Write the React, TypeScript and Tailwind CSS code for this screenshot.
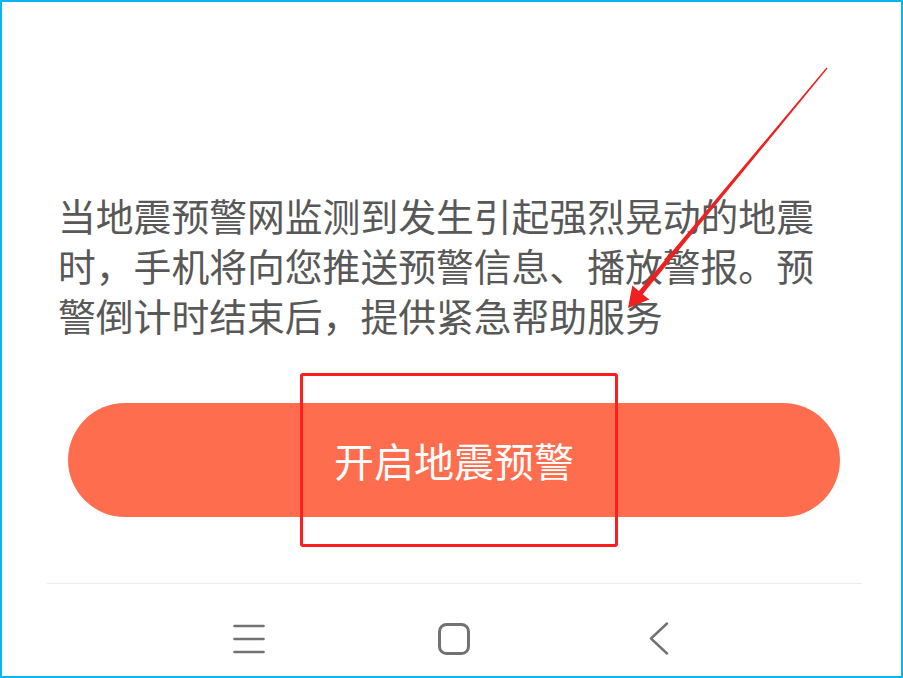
import React from 'react';

const cjk = { fontFamily: '"Noto Sans CJK SC", "Noto Sans", sans-serif' };

const App: React.FC = () => {
  return (
    <div
      className="relative w-[903px] h-[678px] box-border border-2 border-[#0bb4ee] bg-white overflow-hidden"
      style={cjk}
    >
      <div className="flex flex-col pt-[188px]">
        <p className="ml-[56px] w-[780px] text-[37.8px] leading-[50px] text-[#585858]">
          当地震预警网监测到发生引起强烈晃动的地震时，手机将向您推送预警信息、播放警报。预警倒计时结束后，提供紧急帮助服务
        </p>

        <button className="ml-[66px] mt-[63px] w-[772px] h-[114px] rounded-full bg-[#fe6e4e] text-white text-[40px] flex items-center justify-center">
          开启地震预警
        </button>

        <div className="ml-[45px] mt-[66px] w-[815px] h-px bg-[#ececec]" />

        {/* nav bar */}
        <div className="flex items-center ml-[227px] mt-[38px] gap-[165px]">
          <div className="w-[40px] flex justify-center">
            <svg width="32" height="32" viewBox="0 0 32 32" fill="none" stroke="#727272" strokeWidth="2.6" strokeLinecap="round">
              <line x1="1.5" y1="3" x2="30.5" y2="3" />
              <line x1="1.5" y1="16" x2="30.5" y2="16" />
              <line x1="1.5" y1="29" x2="30.5" y2="29" />
            </svg>
          </div>
          <div className="w-[40px] flex justify-center">
            <svg width="32" height="32" viewBox="0 0 32 32" fill="none" stroke="#727272" strokeWidth="3">
              <rect x="1.5" y="1.5" width="29" height="29" rx="7" />
            </svg>
          </div>
          <div className="w-[40px] flex justify-center">
            <svg width="20" height="33" viewBox="0 0 20 33" fill="none" stroke="#727272" strokeWidth="2.4" strokeLinecap="round" strokeLinejoin="round">
              <polyline points="18,1.5 2,16.5 18,31.5" />
            </svg>
          </div>
        </div>
      </div>

      {/* annotation: red box */}
      <div className="absolute left-[298px] top-[371px] w-[318px] h-[174px] border-[3px] border-[#ff1e1e] rounded-[3px]" />

      {/* annotation: arrow */}
      <svg className="absolute left-[-2px] top-[-2px]" width="903" height="678" viewBox="0 0 903 678">
        <polygon
          fill="#ee2020"
          points="827.5,68.4 642.7,294.2 649.3,299.6 628,308 632.3,285.6 638.9,291.0 826.5,67.6"
        />
      </svg>
    </div>
  );
};

export default App;
